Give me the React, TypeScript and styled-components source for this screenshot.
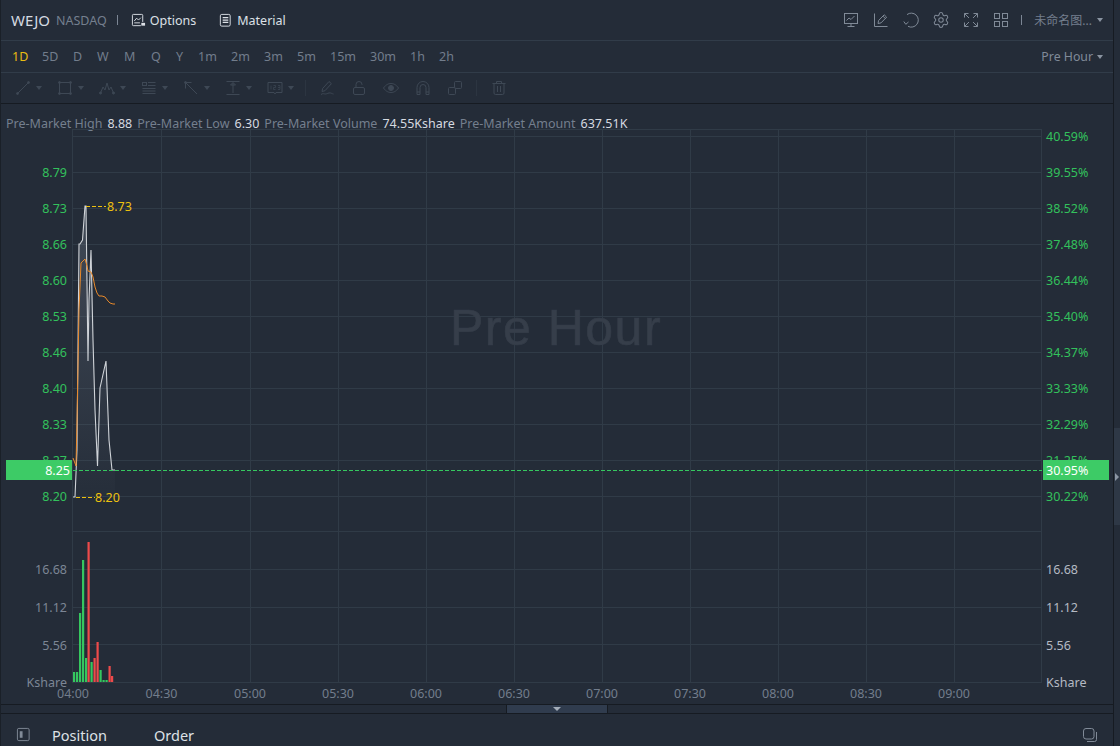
import React from "react";
import styled, { createGlobalStyle } from "styled-components";
import { Settings } from "lucide-react";

const FONT = `"Noto Sans", "Noto Sans CJK SC", sans-serif`;

const Global = createGlobalStyle`
  html, body { margin: 0; padding: 0; background: #242c38; overflow: hidden; }
  body { font-family: ${FONT}; }
  * { box-sizing: border-box; }
`;

const Shell = styled.div`
  width: 1120px;
  height: 746px;
  display: flex;
  background: #242c38;
  overflow: hidden;
`;
const Main = styled.div`
  width: 1114px;
  height: 746px;
  display: flex;
  flex-direction: column;
  border-left: 1px solid #1a2028;
  border-right: 1px solid #161b22;
`;
const SideStrip = styled.div`
  flex: 1;
  display: flex;
  flex-direction: column;
  padding-top: 428px;
`;
const SideHandle = styled.div`
  height: 97px;
  background: #2e3846;
  display: flex;
  align-items: center;
  justify-content: center;
  &::after {
    content: "";
    border-top: 4px solid transparent;
    border-bottom: 4px solid transparent;
    border-left: 4px solid #8b95a3;
  }
`;
const Header = styled.header`
  height: 41px;
  flex: none;
  display: flex;
  align-items: center;
  justify-content: space-between;
  padding: 0 10px 0 10px;
  border-bottom: 1px solid #313c49;
`;
const HeaderGroup = styled.div`
  display: flex;
  align-items: center;
`;
const Symbol = styled.span`
  font-size: 15px;
  color: #d5dae1;
  margin-right: 6px;
`;
const Exchange = styled.span`
  font-size: 12.5px;
  color: #747f8e;
`;
const Bar = styled.span<{ $l: number; $r: number }>`
  width: 1px;
  height: 10px;
  background: #7c8694;
  margin: 0 ${(p) => p.$r}px 0 ${(p) => p.$l}px;
`;
const HeadLink = styled.span<{ $r?: number }>`
  display: flex;
  align-items: center;
  gap: 4px;
  font-size: 12.5px;
  color: #dce0e6;
  margin-right: ${(p) => p.$r ?? 0}px;
`;
const HeadIcons = styled.div`
  display: flex;
  align-items: center;
  gap: 14px;
  color: #808a97;
`;
const GearIcon = styled(Settings)`
  display: block;
  flex: none;
  margin: 0 -1px;
`;
const Layout = styled.span`
  font-size: 12px;
  color: #747f8e;
`;
const Caret = styled.span<{ $dim?: boolean; $ml?: number }>`
  width: 0;
  height: 0;
  margin-left: ${(p) => p.$ml ?? 0}px;
  border-left: 3px solid transparent;
  border-right: 3px solid transparent;
  border-top: 4px solid ${(p) => (p.$dim ? "#3e4855" : "#8a94a1")};
`;
const PeriodBar = styled.nav`
  height: 32px;
  flex: none;
  display: flex;
  align-items: center;
  justify-content: space-between;
  padding: 0 10px 0 11px;
  border-bottom: 1px solid #313c49;
`;
const Periods = styled.div`
  display: flex;
  align-items: center;
`;
const Period = styled.span<{ $active?: boolean; $w: number }>`
  flex: none;
  width: ${(p) => p.$w}px;
  font-size: 12.5px;
  color: ${(p) => (p.$active ? "#e8bb12" : "#727d8c")};
`;
const PreHour = styled.span`
  display: flex;
  align-items: center;
  gap: 4px;
  font-size: 12.3px;
  color: #808a98;
`;
const ToolBar = styled.div`
  height: 31px;
  flex: none;
  display: flex;
  align-items: center;
  padding-left: 14px;
  border-bottom: 1px solid #161b22;
  color: #3e4855;
`;
const ToolGroup = styled.div`
  display: flex;
  align-items: center;
  gap: 16px;
`;
const DropTool = styled.div`
  width: 26px;
  display: flex;
  align-items: center;
  gap: 5px;
`;
const ToolSep = styled.span<{ $l: number; $r: number }>`
  width: 1px;
  height: 16px;
  background: #2c3541;
  margin: 0 ${(p) => p.$r}px 0 ${(p) => p.$l}px;
`;
const InfoRow = styled.div`
  height: 25px;
  flex: none;
  display: flex;
  align-items: flex-end;
  padding: 0 0 0 5px;
  font-size: 12.5px;
  line-height: 11px;
  white-space: nowrap;
`;
const InfoLabel = styled.span`
  color: #747f8e;
  margin-right: 5px;
`;
const InfoValue = styled.span`
  color: #d6dae0;
  margin-right: 5px;
`;
const ChartSvg = styled.svg`
  display: block;
  flex: none;
  width: 1112px;
  height: 575px;
`;
const GridLine = styled.line`
  stroke: #303b47;
  stroke-width: 1;
`;
const AxisText = styled.text<{ $fill: string }>`
  font-family: ${FONT};
  font-size: 12.5px;
  fill: ${(p) => p.$fill};
`;
const Watermark = styled.text`
  font-family: "Liberation Sans", Arial, sans-serif;
  font-size: 50px;
  letter-spacing: 1.5px;
  fill: #363e4a;
  stroke: #363e4a;
  stroke-width: 0.6px;
`;
const Splitter = styled.div`
  height: 10px;
  flex: none;
  display: flex;
  justify-content: center;
  border-top: 1px solid #161b22;
  border-bottom: 1px solid #161b22;
`;
const SplitHandle = styled.div`
  width: 102px;
  background: #303c4e;
  border-left: 1px solid #161b22;
  border-right: 1px solid #161b22;
  display: flex;
  align-items: center;
  justify-content: center;
  &::after {
    content: "";
    border-left: 4px solid transparent;
    border-right: 4px solid transparent;
    border-top: 4px solid #a4adb9;
  }
`;
const Bottom = styled.footer`
  flex: 1;
  display: flex;
  align-items: center;
  padding: 9px 15px 0 15px;
  color: #818b98;
`;
const BottomTab = styled.span<{ $w: number }>`
  width: ${(p) => p.$w}px;
  font-size: 14.5px;
  color: #dde1e6;
`;
const BottomIcon = styled.span<{ $mr?: number }>`
  display: flex;
  margin-right: ${(p) => p.$mr ?? 0}px;
`;
const Spacer = styled.span`
  flex: 1;
`;
const IconSvg = styled.svg`
  display: block;
  flex: none;
`;

type IP = { size?: number; children: React.ReactNode };
const I = ({ size = 16, children }: IP) => (
  <IconSvg width={size} height={size} viewBox="0 0 16 16" fill="none" stroke="currentColor" strokeWidth="1">
    {children}
  </IconSvg>
);

const priceLeft: [string, number][] = [
  ["8.79", 172], ["8.73", 208], ["8.66", 244], ["8.60", 280], ["8.53", 316],
  ["8.46", 352], ["8.40", 388], ["8.33", 424], ["8.27", 460], ["8.20", 496],
];
const priceRight: [string, number][] = [
  ["40.59%", 136], ["39.55%", 172], ["38.52%", 208], ["37.48%", 244], ["36.44%", 280], ["35.40%", 316],
  ["34.37%", 352], ["33.33%", 388], ["32.29%", 424], ["31.25%", 460], ["30.22%", 496],
];
const vols: [string, number][] = [["16.68", 569], ["11.12", 607], ["5.56", 645], ["Kshare", 682]];
const hLines = [136, 172, 208, 244, 280, 316, 352, 388, 424, 460, 496, 531, 569, 607, 644];
const times: [string, number][] = [
  ["04:00", 73], ["04:30", 161.5], ["05:00", 250], ["05:30", 338], ["06:00", 426], ["06:30", 514],
  ["07:00", 602], ["07:30", 690], ["08:00", 778], ["08:30", 866], ["09:00", 954],
];
const bars: [number, number, string][] = [
  [73, 672, "g"], [76, 672, "g"], [79, 613, "g"], [82, 560, "g"], [85, 658, "g"], [87.5, 542, "r"], [90.5, 662, "g"],
  [93.5, 658, "r"], [96.5, 642, "r"], [99.5, 670, "g"], [102.5, 680, "g"], [105.5, 680, "g"], [108.5, 666, "r"], [111, 676, "r"],
];
const pricePts = "73,497 75,497 77,450 79,244 80,244 82.5,240 85,206 86,206 88,361 89,300 91,250 93,340 95,410 97.5,466 100,388 106,361 109,440 112,470 115,470";
const avgPts = "73,458 76,466 77,420 79,310 81,263 83,261 85,259 87,266 88,271 91,272 93,277 95,287 97,293 99,296 102,296 105,297 108,301 110,303 113,304 115,304";

const periods: [string, number][] = [
  ["1D", 30], ["5D", 31], ["D", 24], ["W", 27], ["M", 27], ["Q", 25], ["Y", 22], ["1m", 33], ["2m", 33],
  ["3m", 33], ["5m", 33], ["15m", 40], ["30m", 40], ["1h", 29], ["2h", 20],
];
const GREEN = "#33c15c";
const YEL = "#eec10f";

export default function App() {
  return (
    <Shell>
      <Global />
      <Main>
        <Header>
          <HeaderGroup>
            <Symbol>WEJO</Symbol>
            <Exchange>NASDAQ</Exchange>
            <Bar $l={10} $r={13} />
            <HeadLink $r={22}>
              <I size={15}>
                <path d="M12.5 9.5V2.5a1 1 0 0 0-1-1h-9a1 1 0 0 0-1 1v10a1 1 0 0 0 1 1h8" />
                <path d="M3.5 8.5 6 5.5l2 2 2.5-2.5M3.5 10.500h6" />
                <rect x="11" y="10.500" width="4" height="3" fill="currentColor" stroke="none" />
              </I>
              Options
            </HeadLink>
            <HeadLink>
              <I size={15}>
                <rect x="2.500" y="1.500" width="10.500" height="12.500" rx="1.500" />
                <path d="M5 5h6M5 7.500h6M5 10h6" strokeWidth="1.300" />
              </I>
              Material
            </HeadLink>
          </HeaderGroup>
          <HeaderGroup>
            <HeadIcons>
              <I>
                <rect x="1.500" y="1.500" width="13" height="10" />
                <path d="M3.500 8.500 6 6l2 1.500 3.500-3.500M8 11.500v3M4.500 14.500h7" />
              </I>
              <I>
                <path d="M1.500 1.500v13h13" />
                <path d="M5 11.500l.6-3L11.200 2.800l2.400 2.400-5.600 5.700zM10 4.200l2.400 2.400" />
              </I>
              <I>
                <path d="M4 2.600A7 7 0 1 1 5 14.300" />
                <path d="M.800 9.500 2.800 12.300 5.500 10" />
              </I>
              <GearIcon size={18} strokeWidth={1.350} />
              <I>
                <path d="M1.500 5.500v-4h4M1.500 1.500 6 6M14.500 5.500v-4h-4M14.500 1.500 10 6M1.500 10.500v4h4M1.500 14.500 6 10M14.500 10.500v4h-4M14.500 14.500 10 10" />
              </I>
              <I>
                <rect x="1.500" y="1.500" width="5" height="5" />
                <rect x="9.500" y="1.500" width="5" height="5" />
                <rect x="1.500" y="9.500" width="5" height="5" />
                <rect x="9.500" y="9.500" width="5" height="5" />
              </I>
            </HeadIcons>
            <Bar $l={12} $r={12} />
            <Layout>未命名图...</Layout>
            <Caret $ml={5} />
          </HeaderGroup>
        </Header>

        <PeriodBar>
          <Periods>
            {periods.map(([p, w], i) => (
              <Period key={p} $w={w} $active={i === 0}>{p}</Period>
            ))}
          </Periods>
          <PreHour>
            Pre Hour <Caret />
          </PreHour>
        </PeriodBar>

        <ToolBar>
          <ToolGroup>
            <DropTool>
              <I><path d="M2.500 13.500 13.500 2.500" /><circle cx="2.500" cy="13.500" r="1" fill="currentColor" /><circle cx="13.500" cy="2.500" r="1" fill="currentColor" /></I>
              <Caret $dim />
            </DropTool>
            <DropTool>
              <I><rect x="2.500" y="2.500" width="11" height="11" /><circle cx="2.500" cy="2.500" r="1" fill="currentColor" /><circle cx="13.500" cy="2.500" r="1" fill="currentColor" /><circle cx="2.500" cy="13.500" r="1" fill="currentColor" /><circle cx="13.500" cy="13.500" r="1" fill="currentColor" /></I>
              <Caret $dim />
            </DropTool>
            <DropTool>
              <I><path d="M1.500 13 4 7l2 3 2-7 2 7 2-3 2.500 6" /><circle cx="1.500" cy="13" r="1" fill="currentColor" /><circle cx="14.500" cy="13" r="1" fill="currentColor" /></I>
              <Caret $dim />
            </DropTool>
            <DropTool>
              <I><rect x="1.500" y="2.500" width="4" height="3" /><path d="M7 2.500h7.500M7 5.500h7.500M1.500 8.500h13M1.500 11h13M1.500 13.500h13" /></I>
              <Caret $dim />
            </DropTool>
            <DropTool>
              <I><path d="M2.500 2.500 14 14M2.500 2.500v6M2.500 2.500h6" /><circle cx="2.500" cy="2.500" r="1" fill="currentColor" /></I>
              <Caret $dim />
            </DropTool>
            <DropTool>
              <I><path d="M1.500 1.500h13M1.500 14.500h13M8 3v10M5.500 5 8 2.500 10.500 5z" /></I>
              <Caret $dim />
            </DropTool>
            <DropTool>
              <I><path d="M1 2.500h14v10H9l-1 1.500-1-1.500H1z" /><path d="M4 5.500v4M6.500 5.500h2v2h-2v2h2M11 5.500h2v4h-2M11 7.500h2" strokeWidth=".7" /></I>
              <Caret $dim />
            </DropTool>
          </ToolGroup>
          <ToolSep $l={12} $r={13} />
          <ToolGroup>
            <I><path d="M3 11.500l.6-3 6.400-7 2.400 2.200-6.400 7zM2 14.500c2-1.500 3-.5 4.500-.5s3-1.500 5-1 2 1 3 1" /></I>
            <I><rect x="2.500" y="7.500" width="11" height="7" rx="1.500" /><path d="M5 7.500V4.500a3 3 0 0 1 6 0v.5" /></I>
            <I><path d="M.500 8C3 4.500 5.500 3.500 8 3.500s5 1 7.500 4.500C13 11.500 10.500 12.500 8 12.500S3 11.500.500 8z" /><circle cx="8" cy="8" r="2.500" fill="currentColor" /></I>
            <I><path d="M2 14.500V7.500a6 6 0 0 1 12 0v7h-3V7.500a3 3 0 0 0-6 0v7zM2 12h3M11 12h3" /></I>
            <I><rect x="1.500" y="7.500" width="7" height="7" rx="1" /><rect x="7.500" y="1.500" width="7" height="7" rx="1" /></I>
          </ToolGroup>
          <ToolSep $l={13} $r={14} />
          <I><path d="M1.500 3.500h13M5.500 3.500v-2h5v2M3 3.500V13a1.500 1.500 0 0 0 1.500 1.500h7A1.500 1.500 0 0 0 13 13V3.500M6.500 6v6M9.500 6v6" /></I>
        </ToolBar>

        <InfoRow>
          <InfoLabel>Pre-Market High</InfoLabel><InfoValue>8.88</InfoValue>
          <InfoLabel>Pre-Market Low</InfoLabel><InfoValue>6.30</InfoValue>
          <InfoLabel>Pre-Market Volume</InfoLabel><InfoValue>74.55Kshare</InfoValue>
          <InfoLabel>Pre-Market Amount</InfoLabel><InfoValue>637.51K</InfoValue>
        </InfoRow>

        <ChartSvg viewBox="1 129 1112 575">
          <defs>
            <linearGradient id="area" x1="0" y1="0" x2="0" y2="1">
              <stop offset="0" stopColor="#8a94a3" stopOpacity="0.28" />
              <stop offset="1" stopColor="#8a94a3" stopOpacity="0.02" />
            </linearGradient>
          </defs>
          {hLines.map((y) => <GridLine key={y} x1={73} x2={1042} y1={y + 0.5} y2={y + 0.5} />)}
          <GridLine x1={72.500} x2={1041.500} y1={129.500} y2={129.500} />
          <GridLine x1={72.500} x2={1041.500} y1={682.500} y2={682.500} />
          <GridLine x1={72.500} x2={72.500} y1={129} y2={683} />
          <GridLine x1={1041.500} x2={1041.500} y1={129} y2={683} />
          {times.slice(1).map(([t, x]) => <GridLine key={t} x1={Math.floor(x) + 0.5} x2={Math.floor(x) + 0.5} y1={129} y2={683} />)}

          <Watermark x={556} y={345} textAnchor="middle">Pre Hour</Watermark>

          <polygon points={`${pricePts} 115,497`} fill="url(#area)" />
          <polyline points={pricePts} fill="none" stroke="#cfd3d8" strokeWidth="1.100" />
          <polyline points={avgPts} fill="none" stroke="#e8892a" strokeWidth="1" />

          <path d="M86 206.500h20" stroke={YEL} strokeDasharray="4 2" fill="none" />
          <AxisText x={107} y={211} $fill={YEL}>8.73</AxisText>
          <path d="M76 497.500h19" stroke={YEL} strokeDasharray="4 2" fill="none" />
          <AxisText x={95} y={502} $fill={YEL}>8.20</AxisText>

          {bars.map(([x, y, c]) => (
            <rect key={x} x={x} y={y} width={2.200} height={682 - y} fill={c === "g" ? "#35c75f" : "#ee4a4a"} />
          ))}

          {priceLeft.map(([t, y]) => <AxisText key={t} x={67} y={y + 4.500} textAnchor="end" $fill={GREEN}>{t}</AxisText>)}
          {priceRight.map(([t, y]) => <AxisText key={t} x={1046} y={y + 4.500} $fill={GREEN}>{t}</AxisText>)}
          {vols.map(([t, y]) => <AxisText key={t} x={67} y={y + 4.500} textAnchor="end" $fill="#7c8695">{t}</AxisText>)}
          {vols.map(([t, y]) => <AxisText key={t} x={1046} y={y + 4.500} $fill="#b4bac3">{t}</AxisText>)}
          {times.map(([t, x]) => <AxisText key={t} x={x} y={698} textAnchor="middle" $fill="#727d8c">{t}</AxisText>)}

          <path d="M73 470.500H1042" stroke="#35c75f" strokeDasharray="4 2" fill="none" />
          <rect x={6} y={460} width={66} height={20} fill="#3dcb66" />
          <AxisText x={70} y={475} textAnchor="end" $fill="#ffffff">8.25</AxisText>
          <rect x={1043} y={460} width={66} height={20} fill="#3dcb66" />
          <AxisText x={1046} y={475} $fill="#ffffff">30.95%</AxisText>
        </ChartSvg>

        <Splitter><SplitHandle /></Splitter>

        <Bottom>
          <BottomIcon $mr={21}>
            <I size={15}>
              <rect x="1.500" y="1.500" width="12.500" height="13" rx="1.500" />
              <rect x="4" y="4.500" width="3" height="7" fill="currentColor" stroke="none" />
            </I>
          </BottomIcon>
          <BottomTab $w={102}>Position</BottomTab>
          <BottomTab $w={60}>Order</BottomTab>
          <Spacer />
          <BottomIcon>
            <I size={16}>
              <rect x="1.500" y="1.500" width="10.500" height="10.500" rx="2.500" />
              <path d="M14.500 5v7.500a2 2 0 0 1-2 2H5" />
            </I>
          </BottomIcon>
        </Bottom>
      </Main>
      <SideStrip>
        <SideHandle />
      </SideStrip>
    </Shell>
  );
}
